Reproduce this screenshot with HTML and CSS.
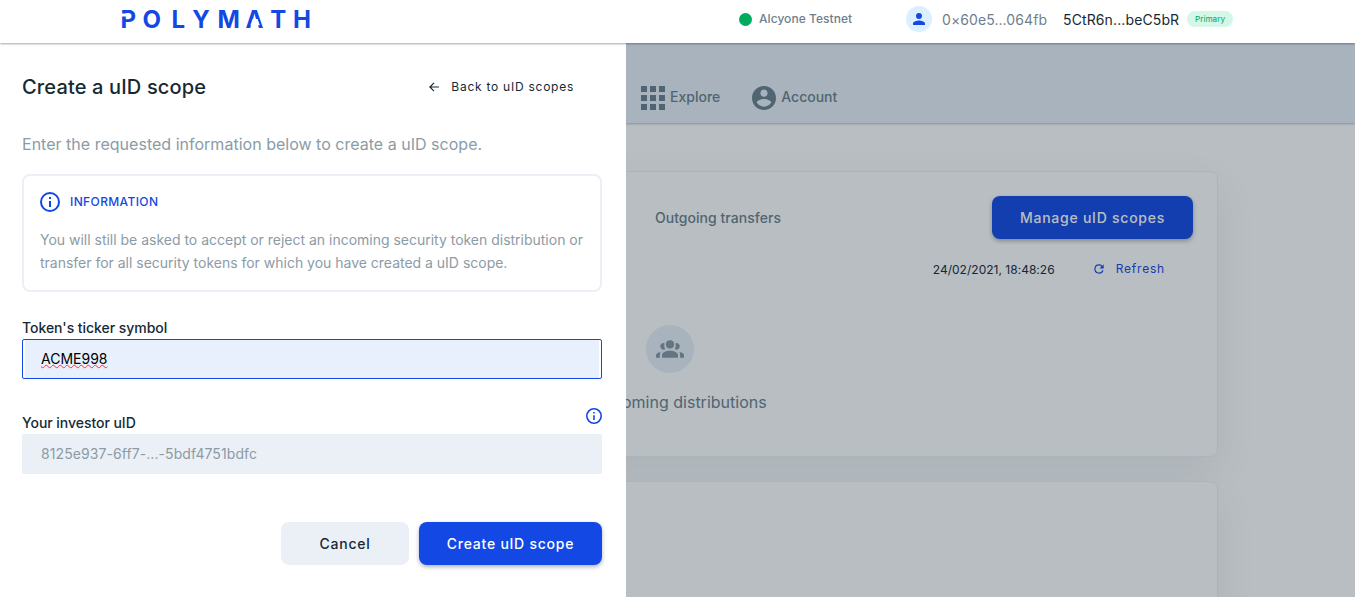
FILE: index.html
```html
<!DOCTYPE html>
<html lang="en">
<head>
<meta charset="utf-8">
<title>Polymath</title>
<link rel="stylesheet" href="styles.css">
</head>
<body>
<header class="header">
  <svg class="logo" width="200" height="36" viewBox="0 -6 200 36" role="img" aria-label="Polymath">
    <text class="wordmark" y="20.6" x="-0.4 21.6 50.6 71.200 96.6 124.5 149.200 172">POLYMATH</text>
    <path class="logo-cut" d="M0 6.400h5v3.200H0zM131.600 12h5l2.200 6.200h-9.400z"/>
  </svg>
  <div class="network"><span class="dot"></span>Alcyone Testnet</div>
  <div class="avatar">
    <svg width="20" height="20" viewBox="0 0 24 24"><path fill="currentColor" d="M12 12a4 4 0 1 0 0-8 4 4 0 0 0 0 8zm0 2c-2.670 0-8 1.340-8 4v2h16v-2c0-2.660-5.330-4-8-4z"/></svg>
  </div>
  <div class="did">0×60e5...064fb</div>
  <div class="account">5CtR6n...beC5bR</div>
  <span class="badge">Primary</span>
</header>

<div class="stage">
  <div class="page">
    <nav class="nav">
      <a class="nav-item explore">
        <svg width="24" height="24" viewBox="0 0 24 24"><path fill="currentColor" d="M0 0h6v6H0zM9 0h6v6H9zM18 0h6v6h-6zM0 9h6v6H0zM9 9h6v6H9zM18 9h6v6h-6zM0 18h6v6H0zM9 18h6v6H9zM18 18h6v6h-6z"/></svg>
        <span>Explore</span>
      </a>
      <a class="nav-item">
        <svg width="24" height="24" viewBox="2 2 20 20"><path fill="currentColor" d="M12 2C6.480 2 2 6.480 2 12s4.480 10 10 10 10-4.480 10-10S17.520 2 12 2zm0 3c1.660 0 3 1.340 3 3s-1.340 3-3 3-3-1.340-3-3 1.340-3 3-3zm0 14.200c-2.500 0-4.710-1.280-6-3.220.030-1.990 4-3.080 6-3.080 1.990 0 5.970 1.090 6 3.080-1.290 1.940-3.500 3.220-6 3.220z"/></svg>
        <span>Account</span>
      </a>
    </nav>
    <main class="cards">
      <section class="card transfers">
        <div class="card-top">
          <span class="tab">Outgoing transfers</span>
          <button class="btn btn-primary manage">Manage uID scopes</button>
        </div>
        <div class="status">
          <span class="stamp">24/02/2021, 18:48:26</span>
          <span class="refresh">
            <svg width="14" height="14" viewBox="0 0 24 24"><path fill="currentColor" d="M17.650 6.350A7.960 7.960 0 0 0 12 4a8 8 0 1 0 7.730 10h-2.080A6 6 0 1 1 12 6c1.660 0 3.140.690 4.220 1.780L13 11h7V4z"/></svg>
            <span>Refresh</span>
          </span>
        </div>
        <div class="empty">
          <div class="empty-icon">
            <svg width="28" height="18" viewBox="0 0 28 18"><g fill="currentColor"><circle cx="14" cy="4.400" r="4.100"/><path d="M8.600 3.200a7 7 0 0 0 .5 6A3.300 3.300 0 1 1 8.600 3.200zM19.400 3.200a7 7 0 0 1-.5 6A3.300 3.300 0 1 0 19.400 3.200zM6 17.700v-2.600c0-2.400 3.600-4.300 8-4.300s8 1.900 8 4.300v2.600zM0 17.700v-2.200c0-1.600 1.700-2.900 4.600-3.500-.500.900-.700 1.900-.7 3v2.700zM28 17.700v-2.200c0-1.600-1.700-2.900-4.600-3.500.500.900.700 1.900.7 3v2.700z"/></g></svg>
          </div>
          <p class="empty-text">No incoming distributions</p>
        </div>
      </section>
      <section class="card second"></section>
    </main>
  </div>
  <div class="overlay"></div>

  <aside class="drawer">
    <div class="drawer-head">
      <h1 class="title">Create a uID scope</h1>
      <a class="back">
        <svg width="14" height="14" viewBox="0 0 24 24"><path fill="currentColor" d="M20.500 11H7.400l5.300-5.300L11.300 4.200 3.500 12l7.800 7.800 1.400-1.500L7.400 13h13.100z"/></svg>
        <span>Back to uID scopes</span>
      </a>
    </div>
    <p class="lead">Enter the requested information below to create a uID scope.</p>
    <div class="info">
      <div class="info-head">
        <svg width="20" height="20" viewBox="2 2 20 20"><path fill="currentColor" d="M11 7h2v2h-2zm0 4h2v6h-2zm1-9a10 10 0 1 0 0 20 10 10 0 0 0 0-20zm0 18a8 8 0 1 1 0-16 8 8 0 0 1 0 16z"/></svg>
        <span>INFORMATION</span>
      </div>
      <p class="info-text">You will still be asked to accept or reject an incoming security token distribution or<br>transfer for all security tokens for which you have created a uID scope.</p>
    </div>
    <div class="label">Token's ticker symbol</div>
    <div class="field field-active"><div class="fill"><span class="typo">ACME998</span></div></div>
    <div class="label-row">
      <div class="label">Your investor uID</div>
      <svg class="hint" width="16" height="16" viewBox="2 2 20 20"><path fill="currentColor" d="M11 7h2v2h-2zm0 4h2v6h-2zm1-9a10 10 0 1 0 0 20 10 10 0 0 0 0-20zm0 18a8 8 0 1 1 0-16 8 8 0 0 1 0 16z"/></svg>
    </div>
    <div class="field field-disabled">8125e937-6ff7-...-5bdf4751bdfc</div>
    <div class="actions">
      <button class="btn cancel">Cancel</button>
      <button class="btn btn-primary create">Create uID scope</button>
    </div>
  </aside>
</div>
</body>
</html>
```
FILE: styles.css
```css
* { box-sizing: border-box; }
body {
  margin: 0;
  height: 597px;
  overflow: hidden;
  display: flex;
  flex-direction: column;
  font-family: Inter, "Liberation Sans", sans-serif;
  color: #152935;
  background: #fff;
}
h1, p { margin: 0; }
svg { display: block; flex: none; }

.header {
  height: 43px;
  flex: none;
  display: flex;
  align-items: center;
  padding: 0 0 5px 121px;
  background: #fff;
  box-shadow: 0 1px 2px rgba(21, 41, 53, 0.4);
  position: relative;
  z-index: 2;
  white-space: nowrap;
}
.logo { overflow: visible; }
.wordmark { font-size: 24px; font-weight: 700; fill: #1348e4; }
.logo-cut { fill: #fff; }
.network {
  display: flex;
  align-items: center;
  gap: 7px;
  width: 167px;
  margin-left: 418px;
  padding-bottom: 1px;
  font-size: 12px;
  letter-spacing: 0.05px;
  font-weight: 500;
  color: #6e7f8d;
}
.dot { width: 13px; height: 13px; border-radius: 50%; background: #00aa5e; position: relative; top: 0.5px; }
.avatar {
  width: 26px;
  height: 26px;
  display: flex;
  align-items: center;
  justify-content: center;
  border-radius: 50%;
  background: #dcefff;
  color: #1348e4;
}
.avatar svg { width: 18px; height: 18px; }
.did { width: 121px; margin-left: 10px; font-size: 14px; letter-spacing: 0.08px; color: #6e7f8d; }
.account { width: 124px; font-size: 14px; letter-spacing: 0.12px; }
.badge {
  width: 46px;
  height: 16px;
  border-radius: 8px;
  background: #d4f7e7;
  color: #00aa5e;
  font-size: 8.200px;
  line-height: 16px;
  text-align: center;
}

.stage { flex: 1; position: relative; overflow: hidden; }
.nav {
  height: 80px;
  display: flex;
  gap: 32px;
  padding: 29px 0 0 641px;
  background: #e8f0f8;
  box-shadow: 0 1px 2px rgba(21, 41, 53, 0.3);
  position: relative;
}
.nav-item {
  height: 52px;
  display: flex;
  align-items: center;
  gap: 5px;
  font-size: 14px;
  font-weight: 500;
  color: #6b7f8b;
}
.nav-item span { padding-bottom: 3px; }
.page { background: #fff; height: 100%; }
.cards { display: flex; flex-direction: column; gap: 24px; padding: 48px 137px 0; }
.card {
  border: 1px solid #edf1f5;
  border-radius: 8px;
  box-shadow: 0 15px 40px rgba(21, 41, 53, 0.08);
  background: #fff;
}
.transfers { height: 286px; padding: 24px 24px 0 517px; }
.second { height: 286px; }
.card-top { display: flex; justify-content: space-between; align-items: center; }
.tab { font-size: 14px; font-weight: 500; letter-spacing: 0.03px; color: #6b7f8b; }
.status { display: flex; align-items: center; justify-content: flex-end; height: 60px; padding-right: 28px; gap: 37px; }
.stamp { font-size: 12px; letter-spacing: 0.02px; }
.refresh { display: flex; align-items: center; gap: 10px; font-size: 12px; letter-spacing: 0.8px; color: #1348e4; }
.refresh span { padding-bottom: 1px; }
.empty { width: 192px; margin-left: -81px; padding-top: 26px; display: flex; flex-direction: column; align-items: center; }
.empty-icon {
  width: 48px;
  height: 48px;
  border-radius: 50%;
  background: #e8f0f8;
  color: #8597a2;
  display: flex;
  align-items: center;
  justify-content: center;
}
.empty-text { margin-top: 17px; font-size: 16px; line-height: 24px; color: #6b7f8b; white-space: nowrap; }

.overlay { position: absolute; inset: 0; background: rgba(21, 41, 53, 0.3); }
.drawer {
  position: absolute;
  inset: 0 auto 0 0;
  width: 626px;
  padding: 29px 24px 0 22px;
  background: #fff;
}
.drawer-head { display: flex; justify-content: space-between; align-items: center; height: 30px; padding-right: 28px; }
.title { font-size: 20px; font-weight: 500; letter-spacing: 0.15px; }
.back { display: flex; align-items: center; gap: 10px; font-size: 12px; letter-spacing: 0.75px; }
.back span { padding-bottom: 1px; }
.lead { margin-top: 30px; font-size: 16px; line-height: 24px; letter-spacing: 0.015px; color: #8c9ba5; }
.info {
  height: 118px;
  margin-top: 18px;
  padding: 16px 16px 0;
  border: 2px solid #ebf0f7;
  border-radius: 8px;
}
.info-head { display: flex; align-items: center; gap: 10px; font-size: 12px; font-weight: 500; letter-spacing: 0.38px; color: #1348e4; }
.info-head span { padding-bottom: 2px; }
.info-text { margin-top: 16px; font-size: 14px; line-height: 23px; letter-spacing: -0.01px; color: #8c9ba5; white-space: nowrap; }
.label { font-size: 14px; font-weight: 500; line-height: 22px; letter-spacing: -0.04px; }
.info + .label { margin-top: 25px; }
.field { height: 40px; border-radius: 2px; font-size: 14px; }
.field-active { border: 1px solid #1348e4; padding: 0 2px; color: #000; }
.fill { height: 38px; padding-left: 16px; line-height: 38px; background: #e8f0fe; }
.typo { text-decoration: underline wavy #f33 0.5px; text-decoration-skip-ink: none; text-underline-offset: 0; }
.label-row { display: flex; justify-content: space-between; height: 22px; margin-top: 33px; }
.hint { margin-top: -4px; color: #1348e4; }
.field-disabled { padding-left: 19px; line-height: 40px; letter-spacing: 0.08px; background: #ebf0f7; color: #8c9ba5; }
.actions { display: flex; justify-content: flex-end; gap: 10px; margin-top: 48px; }
.btn {
  height: 43px;
  border: 0;
  padding: 0;
  border-radius: 8px;
  font-family: inherit;
  font-size: 14px;
  font-weight: 500;
  letter-spacing: 0.75px;
  color: inherit;
}
.btn-primary { background: #1348e4; color: #fff; box-shadow: 0 2px 4px rgba(21, 41, 53, 0.35); }
.manage { width: 201px; }
.cancel { width: 128px; background: #ebf0f7; }
.create { width: 183px; }
```
